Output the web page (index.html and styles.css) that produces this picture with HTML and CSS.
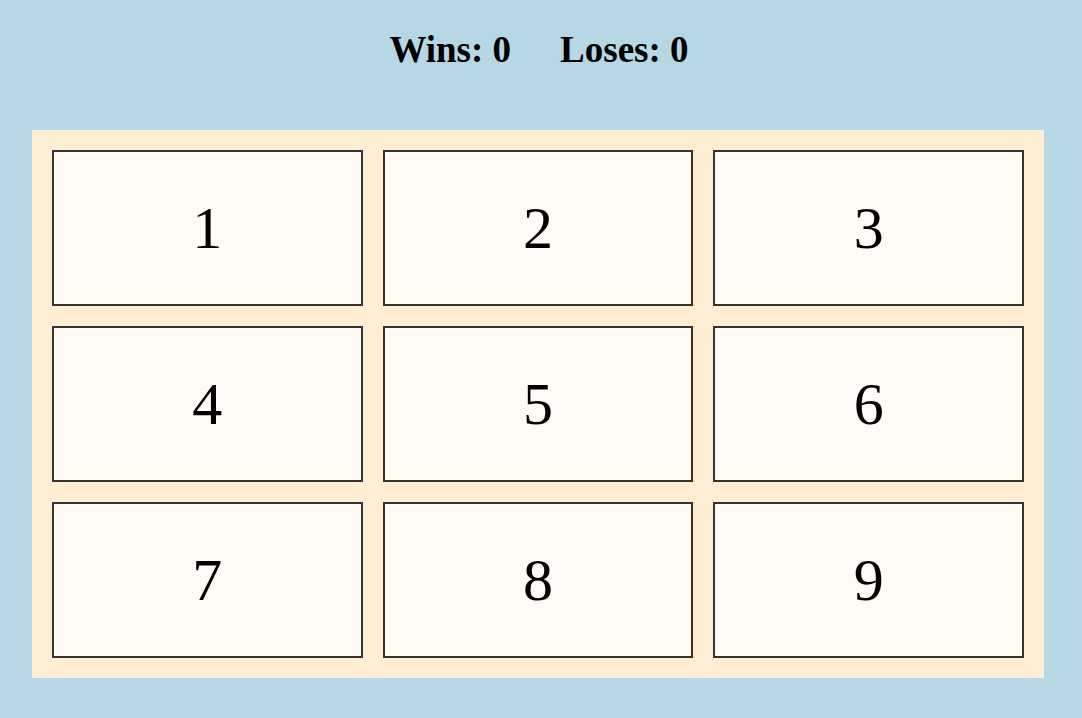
FILE: index.html
```html
<!DOCTYPE html>
<html>
<head>
<meta charset="utf-8">
<link rel="stylesheet" href="styles.css">
</head>
<body>
<div class="score">
  <span class="score-item">Wins: 0</span>
  <span class="score-item">Loses: 0</span>
</div>
<div class="board">
  <div class="cell">1</div>
  <div class="cell">2</div>
  <div class="cell">3</div>
  <div class="cell">4</div>
  <div class="cell">5</div>
  <div class="cell">6</div>
  <div class="cell">7</div>
  <div class="cell">8</div>
  <div class="cell">9</div>
</div>
</body>
</html>
```
FILE: styles.css
```css
html, body {
  margin: 0;
  padding: 0;
}
body {
  background: #b5d8e4;
  font-family: "Liberation Serif", "Times New Roman", serif;
  color: #000;
  width: 1082px;
  height: 718px;
  overflow: hidden;
}
.score {
  height: 130px;
  box-sizing: border-box;
  padding-top: 32px;
  padding-right: 4px;
  display: flex;
  justify-content: center;
  gap: 49px;
  font-weight: bold;
  font-size: 37px;
  line-height: 36px;
}
.board {
  margin-left: 32px;
  width: 1012px;
  height: 548px;
  box-sizing: border-box;
  padding: 20px;
  background: #feedd3;
  display: grid;
  grid-template-columns: repeat(3, 1fr);
  grid-template-rows: repeat(3, 1fr);
  gap: 20px;
}
.cell {
  background: #fffaf4;
  border: 2px solid #333;
  display: flex;
  align-items: center;
  justify-content: center;
  font-size: 60px;
}
```
